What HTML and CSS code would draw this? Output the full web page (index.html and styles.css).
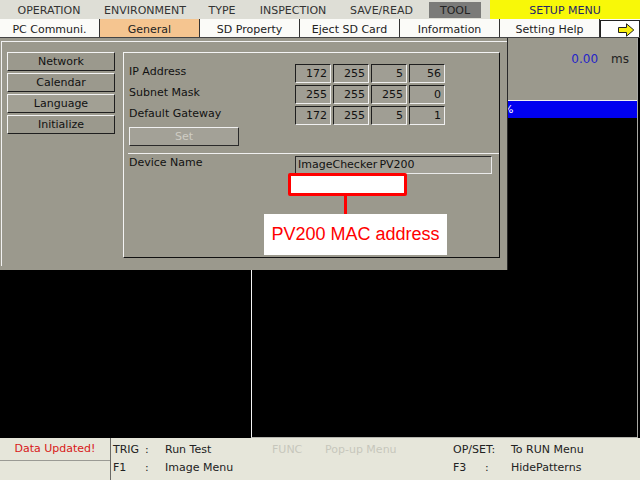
FILE: index.html
```html
<!DOCTYPE html>
<html>
<head>
<meta charset="utf-8">
<link rel="stylesheet" href="styles.css">
</head>
<body>
<div class="screen">
  <div class="menubar">
    <span class="mi m-op">OPERATION</span>
    <span class="mi m-env">ENVIRONMENT</span>
    <span class="mi m-type">TYPE</span>
    <span class="mi m-insp">INSPECTION</span>
    <span class="mi m-save">SAVE/READ</span>
    <span class="mi tool">TOOL</span>
    <span class="setup">SETUP MENU</span>
  </div>
  <div class="tabs">
    <span class="tab">PC Communi.</span>
    <span class="tab active">General</span>
    <span class="tab">SD Property</span>
    <span class="tab">Eject SD Card</span>
    <span class="tab">Information</span>
    <span class="tab">Setting Help</span>
    <span class="tab-arrow">
      <svg width="17" height="14" viewBox="0 0 17 14"><path d="M0.5 4.5 H8.5 V0.8 L15.8 7 L8.5 13.2 V9.5 H0.5 Z" fill="#f8ee10" stroke="#222" stroke-width="1"/></svg>
    </span>
  </div>
  <div class="work">
    <div class="leftspace"></div>
    <div class="view">
      <div class="view-head"><span class="val">0.00</span><span class="unit">ms</span></div>
      <div class="view-bar"><span>%</span></div>
      <div class="view-body"></div>
    </div>
    <div class="dialog">
      <div class="frame">
        <div class="nav">
          <div class="navbtn">Network</div>
          <div class="navbtn">Calendar</div>
          <div class="navbtn sel">Language</div>
          <div class="navbtn">Initialize</div>
        </div>
        <div class="sub">
          <div class="row">
            <span class="lbl">IP Address</span>
            <span class="num">172</span><span class="num">255</span><span class="num">5</span><span class="num">56</span>
          </div>
          <div class="row">
            <span class="lbl">Subnet Mask</span>
            <span class="num">255</span><span class="num">255</span><span class="num">255</span><span class="num">0</span>
          </div>
          <div class="row">
            <span class="lbl">Default Gateway</span>
            <span class="num">172</span><span class="num">255</span><span class="num">5</span><span class="num">1</span>
          </div>
          <div class="setbtn">Set</div>
          <div class="sep"></div>
          <div class="row dev">
            <span class="lbl">Device Name</span>
            <span class="field">ImageChecker<span class="thin"> </span>PV200</span>
          </div>
          <div class="co-box"></div>
          <div class="co-line"></div>
          <div class="co-label">PV200 MAC address</div>
        </div>
      </div>
    </div>
  </div>
  <div class="status">
    <div class="st-left">
      <div class="st-msg">Data Updated!</div>
      <div class="st-empty"></div>
    </div>
    <div class="st-grid">
      <span>TRIG</span><span>:</span><span>Run Test</span><span class="dis">FUNC</span><span class="dis">Pop-up Menu</span><span class="span2">OP/SET:</span><span>To RUN Menu</span>
      <span>F1</span><span>:</span><span>Image Menu</span><span></span><span></span><span>F3</span><span>:</span><span>HidePatterns</span>
    </div>
  </div>
</div>
</body>
</html>
```

FILE: styles.css
```css
html, body { margin: 0; padding: 0; }
body {
  background: #000;
  font-family: "DejaVu Sans", sans-serif;
  font-size: 11px;
  color: #1a1a1a;
}
.screen {
  width: 640px;
  height: 480px;
  overflow: hidden;
  display: flex;
  flex-direction: column;
}

/* top menu */
.menubar {
  height: 19px;
  display: flex;
  background: #deded6;
  color: #333;
  flex: none;
}
.mi { display: flex; align-items: center; justify-content: center; padding-top: 1px; }
.m-op { width: 98px; }
.m-env { width: 94px; }
.m-type { width: 60px; }
.m-insp { width: 82px; }
.m-save { width: 95px; }
.tool {
  width: 52px;
  height: 16px;
  margin-top: 2px;
  padding-top: 0;
  background: #7b7b79;
  color: #222;
}
.setup {
  margin-left: 9px;
  width: 150px;
  background: #f8f808;
  color: #26266a;
  display: flex;
  align-items: center;
  justify-content: center;
  padding-top: 1px;
}

/* tabs */
.tabs {
  height: 18px;
  display: flex;
  background: #fbfbf8;
  border-bottom: 1px solid #444;
  flex: none;
}
.tab {
  width: 99px;
  border-right: 1px solid #333;
  display: flex;
  align-items: center;
  justify-content: center;
  padding-top: 2px;
  color: #222;
}
.tab.active { background: #f5c590; }
.tab-arrow {
  flex: 1;
  margin-top: 1px;
  border: 1px solid #222;
  border-bottom: none;
  background: #fff;
  display: flex;
  align-items: center;
  justify-content: flex-end;
  padding: 2px 4px 0 0;
}

/* work area */
.work {
  height: 400px;
  position: relative;
  display: flex;
  flex: none;
}
.leftspace { width: 251px; }
.view {
  width: 387px;
  box-sizing: border-box;
  border-left: 1px solid #f4f4f4;
  border-right: 1px solid #a8a8a4;
  border-bottom: 1px solid #b4b4ae;
  display: flex;
  flex-direction: column;
}
.view-head {
  height: 62px;
  background: #9b998d;
  display: flex;
  justify-content: flex-end;
  align-items: flex-start;
  padding-top: 14px;
  box-sizing: border-box;
}
.val { color: #2424c8; margin-right: 13px; font-size: 12px; }
.unit { color: #222; margin-right: 8px; font-size: 12px; }
.view-bar {
  height: 17px;
  border-top: 1px solid #f0f0f0;
  background: #0000f0;
  color: #fff;
  padding-left: 251px;
  line-height: 17px;
}
.view-body { flex: 1; background: #000; }

/* dialog */
.dialog {
  position: absolute;
  left: 0;
  top: 0;
  width: 508px;
  height: 232px;
  box-sizing: border-box;
  background: #9b998d;
  border-right: 1px solid #2a2a2a;
  padding: 3px 0 4px 1px;
  display: flex;
}
.frame {
  flex: 1;
  border-top: 1px solid #f2f2f2;
  border-left: 1px solid #f2f2f2;
  padding: 10px 6px 0 5px;
  display: flex;
  align-items: flex-start;
}
.nav {
  width: 108px;
  display: flex;
  flex-direction: column;
  gap: 2px;
}
.navbtn {
  height: 19px;
  box-sizing: border-box;
  border: 1px solid;
  border-color: #f4f4f4 #1e1e1e #1e1e1e #f4f4f4;
  text-align: center;
  line-height: 17px;
  color: #111;
}
.navbtn.sel { background: #a2a094; }

.sub {
  position: relative;
  margin-left: 8px;
  width: 377px;
  height: 206px;
  box-sizing: border-box;
  border: 1px solid;
  border-color: #f4f4f4 #111 #111 #f4f4f4;
  padding: 11px 0 0 5px;
}
.row {
  display: flex;
  gap: 2px;
  height: 19px;
  margin-bottom: 2px;
}
.lbl {
  width: 164px;
  line-height: 15px;
  color: #111;
}
.num {
  width: 36px;
  box-sizing: border-box;
  border: 1px solid;
  border-color: #1e1e1e #f0f0f0 #f0f0f0 #1e1e1e;
  background: #a09e94;
  text-align: right;
  padding-right: 3px;
  line-height: 17px;
  color: #111;
}
.setbtn {
  width: 110px;
  height: 19px;
  box-sizing: border-box;
  border: 1px solid;
  border-color: #f0f0f0 #2a2a2a #2a2a2a #f0f0f0;
  background: #a3a197;
  color: #cfcdc4;
  text-align: center;
  line-height: 17px;
}
.sep {
  height: 1px;
  background: #f0f0f0;
  margin: 7px 0 0 -1px;
}
.row.dev { margin-top: 2px; height: 18px; }
.row.dev .lbl { line-height: 13px; }
.field {
  width: 197px;
  box-sizing: border-box;
  border: 1px solid;
  border-color: #2a2a2a #eaeaea #eaeaea #2a2a2a;
  background: #a3a197;
  line-height: 16px;
  padding-left: 2px;
  color: #111;
}
.thin { font-size: 7px; }

/* annotation callout */
.co-box {
  position: absolute;
  left: 164px;
  top: 120px;
  width: 119px;
  height: 23px;
  box-sizing: border-box;
  border: 3px solid #ff0000;
  border-radius: 2px;
  background: #fff;
}
.co-line {
  position: absolute;
  left: 220px;
  top: 143px;
  width: 3px;
  height: 18px;
  background: #ff0000;
}
.co-label {
  position: absolute;
  left: 140px;
  top: 161px;
  width: 183px;
  height: 41px;
  background: #fff;
  color: #ff0000;
  font-family: "Liberation Sans", Arial, sans-serif;
  font-size: 18px;
  line-height: 41px;
  text-align: center;
}

/* status bar */
.status {
  height: 42px;
  background: #e6e6da;
  display: flex;
  flex: none;
}
.st-left {
  width: 110px;
  border-right: 1px solid #6a6a66;
  display: flex;
  flex-direction: column;
}
.st-msg {
  height: 22px;
  border-bottom: 1px solid #9a9a94;
  color: #d81818;
  text-align: center;
  line-height: 22px;
}
.st-grid {
  flex: 1;
  display: grid;
  grid-template-columns: 32px 20px 107px 53px 128px 32px 26px auto;
  grid-auto-rows: 18px;
  padding: 3px 0 0 2px;
  line-height: 18px;
  color: #222;
}
.st-grid .dis { color: #c6c6bc; }
.st-grid .span2 { grid-column: span 2; }
```
